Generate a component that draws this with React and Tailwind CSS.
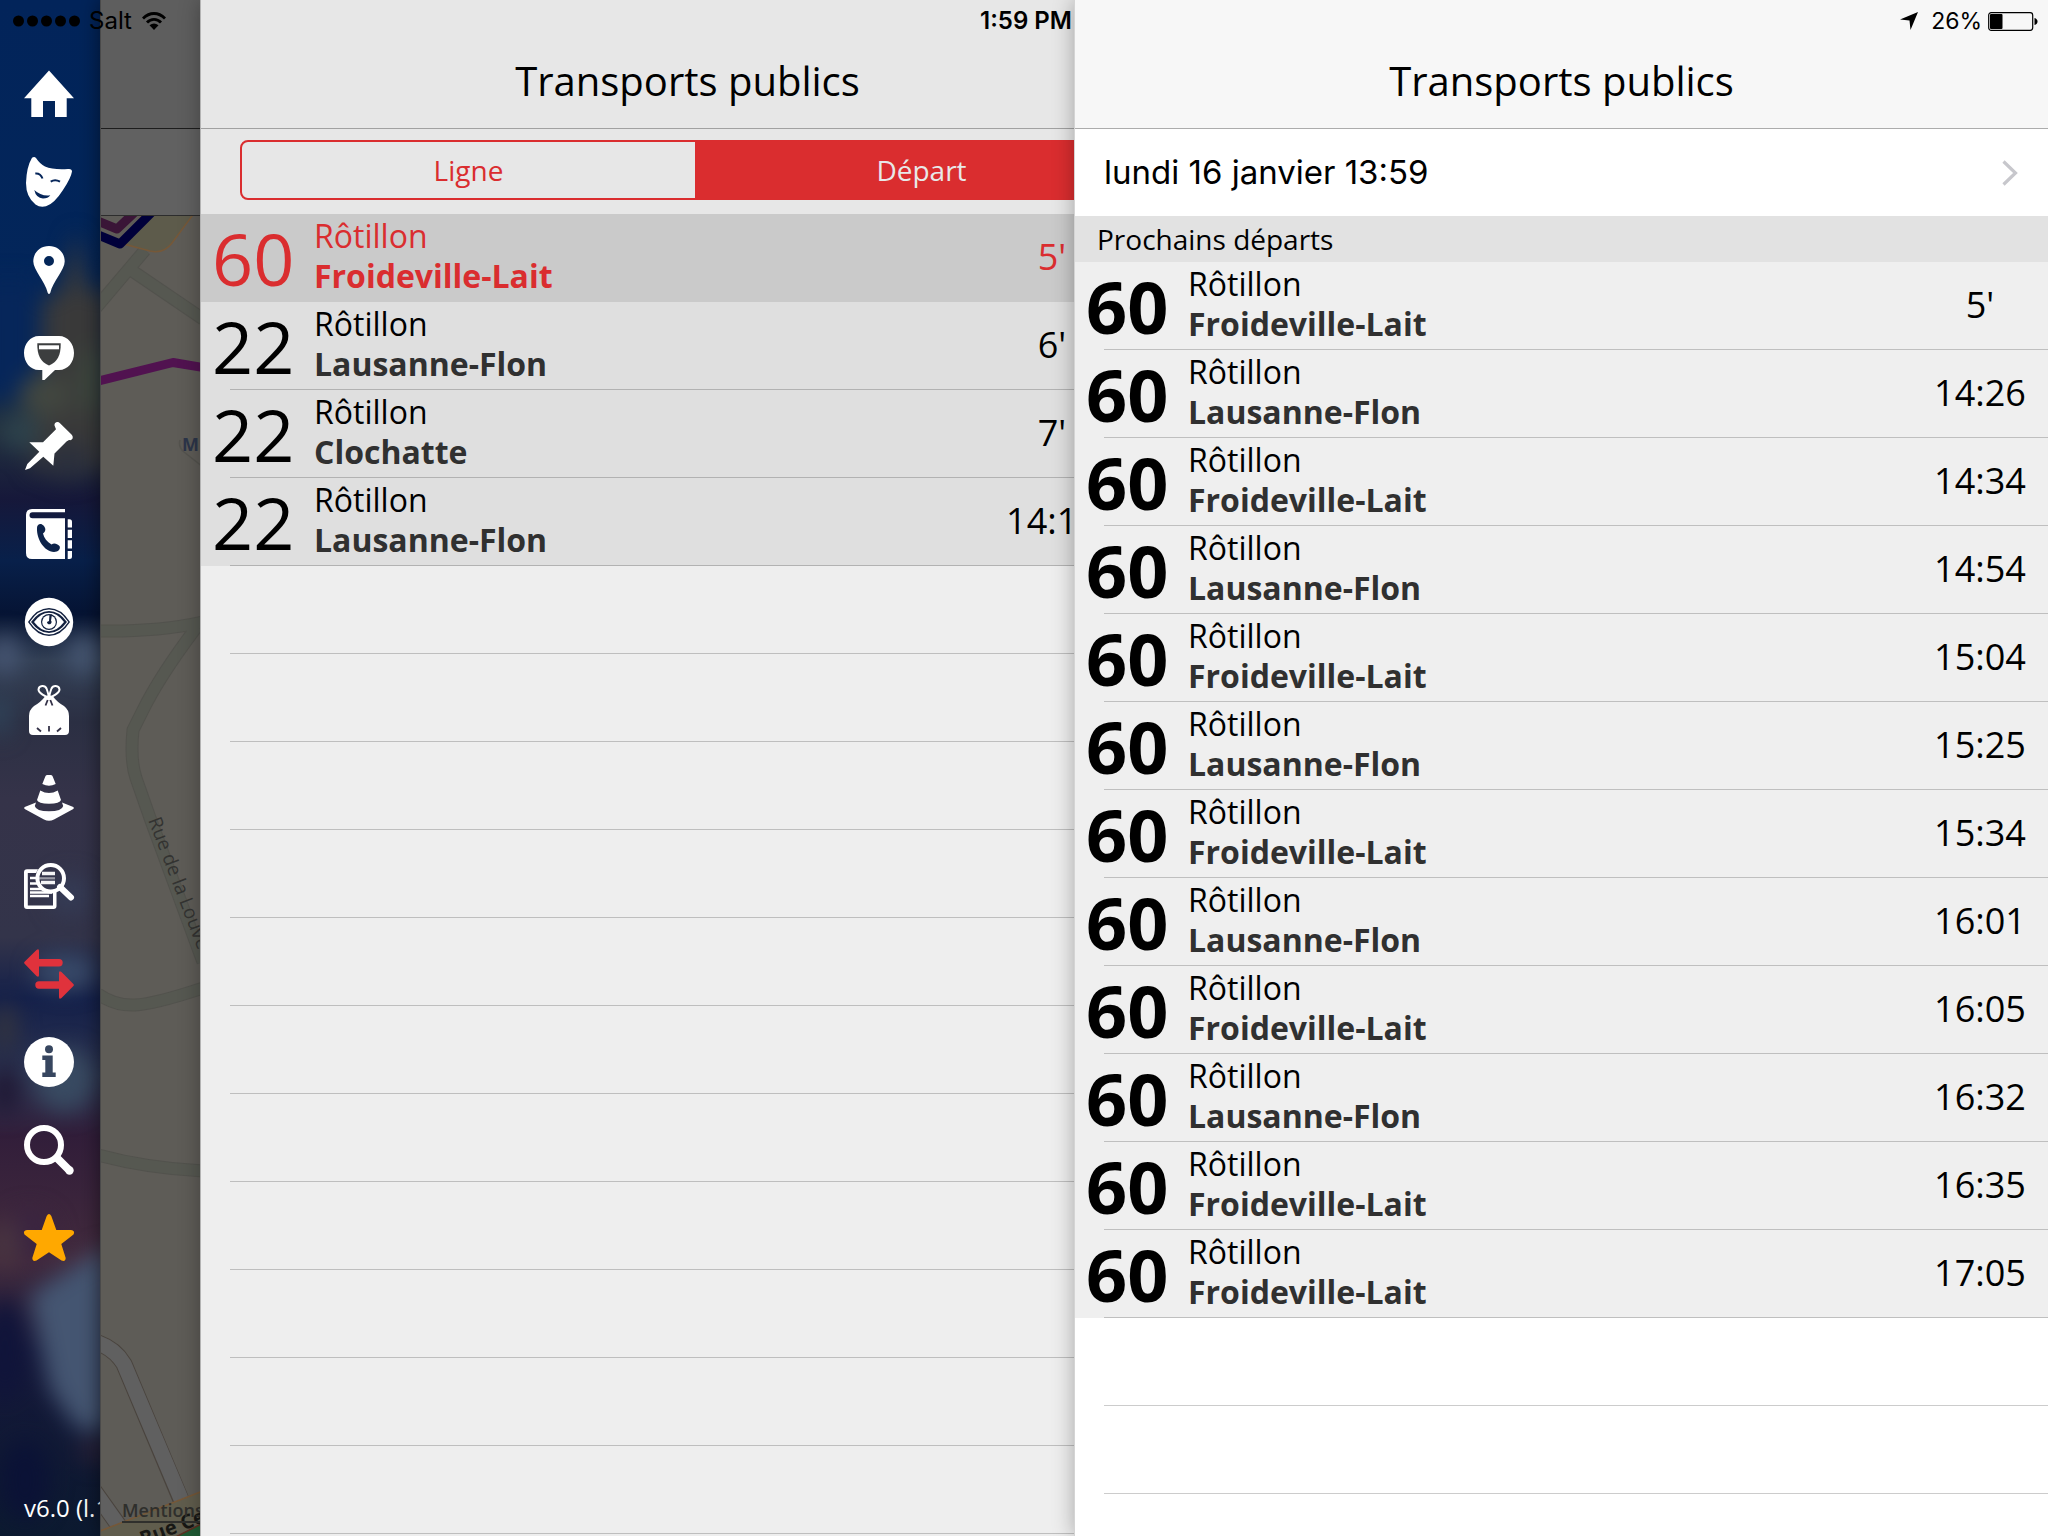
import React, { useState } from "react";

const nearby = [
    { line: "60", stop: "Rôtillon", to: "Froideville-Lait", time: "5'" },
    { line: "22", stop: "Rôtillon", to: "Lausanne-Flon", time: "6'" },
    { line: "22", stop: "Rôtillon", to: "Clochatte", time: "7'" },
    { line: "22", stop: "Rôtillon", to: "Lausanne-Flon", time: "14:14" },
];

const departures = [
    { to: "Froideville-Lait", time: "5'" },
    { to: "Lausanne-Flon", time: "14:26" },
    { to: "Froideville-Lait", time: "14:34" },
    { to: "Lausanne-Flon", time: "14:54" },
    { to: "Froideville-Lait", time: "15:04" },
    { to: "Lausanne-Flon", time: "15:25" },
    { to: "Froideville-Lait", time: "15:34" },
    { to: "Lausanne-Flon", time: "16:01" },
    { to: "Froideville-Lait", time: "16:05" },
    { to: "Lausanne-Flon", time: "16:32" },
    { to: "Froideville-Lait", time: "16:35" },
    { to: "Froideville-Lait", time: "17:05" },
];

const navItems = [
    {
        label: "Accueil",
        icon: <path d="M25 1.5 50 29.3h-7.3V48H31V32H19v16H7.3V29.3H0Z" />,
    },
    {
        label: "Culture",
        icon: (
            <>
                <path d="M8 .8Q10.300-.8 12 1Q16 7 21 9.500Q29 13 44 12Q48 11.500 48 14.500Q47 21 39 33Q30 47 22 49.300Q16 50.800 11.500 47.500Q2 40 2 26Q2.500 10 8 .8Z" />
                <path d="M11.300 16.500Q16.500 16 18.500 21.500M26.700 24.700Q31 21.800 36 24.700" fill="none" stroke="#06265a" strokeWidth="2" />
                <path d="M10.300 33Q17 39.500 26.300 38.300Q24 41.500 19 41.500Q12 41 10.300 33Z" fill="#06265a" />
            </>
        ),
    },
    {
        label: "Lieux",
        icon: (
            <path fillRule="evenodd" d="M25 1C34 1 40.700 7.500 40.700 16.500C40.700 25 29 36 26.200 48Q25 50 23.800 48C21 36 9.300 25 9.300 16.500C9.300 7.500 16 1 25 1ZM25 11a5 5 0 1 0 0 10a5 5 0 0 0 0-10Z" />
        ),
    },
    {
        label: "Ville",
        icon: (
            <>
                <path d="M15 3H35C44 3 50 11 50 20S44 37 35 37H31L20.500 47H18.300V37H15C6 37 0 29 0 20S6 3 15 3Z" />
                <path d="M13.300 10.300H36.700C37 22 33.500 29 25 32.500C16.500 29 13 22 13.300 10.300Z" fill="#3c3e3f" />
                <path d="M15 12.300H35V16.300H15Z" />
            </>
        ),
    },
    {
        label: "Signaler",
        icon: (
            <path d="M30.500 4.500C30 1 34 0 36 2.200L47.500 13.500C50 16 48.500 20 45 19L42.500 20.500L30.500 32.500L29.300 44.700L19.300 35.700L6 47.300L1 49L3.300 43L15.300 30.700L5.300 21.300L19 21.300L32 8.300Z" />
        ),
    },
    {
        label: "Annuaire",
        icon: (
            <>
                <path d="M8 0H41V3.300H8.500A3 3 0 0 0 8.500 9.300H41V50H8Q2 50 2 44V6Q2 0 8 0Z" />
                <path d="M43.700 10.300H45.500Q48 10.300 48 13V18.500H43.700ZM43.700 20.700H48V29H43.700ZM43.700 31.300H48V39.500H43.700ZM43.700 42H48V47.500Q48 50 45.500 50H43.700Z" />
                <path d="M13 19C13 15 17 13.500 19.500 16.500C22.500 20 21.500 22.500 19 24.500C20 29 23 33 27.500 35.500C30 33.500 33 34.500 35.500 37C37 40 34 43 30 43C20 42.500 12.500 30 13 19Z" fill="#0d234a" />
            </>
        ),
    },
    {
        label: "Observer",
        icon: (
            <>
                <circle cx="25" cy="25" r="24.200" />
                <path d="M4 25Q13 11 25 11T46 25Q37 39 25 39T4 25Z" fill="#12203f" />
                <path d="M5.700 25Q14 12.600 25 12.600T44.300 25Q36 37.400 25 37.400T5.700 25Z" />
                <path d="M7 25Q15 14 25 14T43 25Q35 36 25 36T7 25Z" fill="#12203f" />
                <path d="M10 25Q17 15.800 25 15.800T40 25Q33 34.200 25 34.200T10 25Z" />
                <circle cx="25" cy="25" r="8" fill="#12203f" />
                <circle cx="25" cy="25" r="6.800" />
                <path d="M25.500 17.500H28L27 23.500A2.300 2.300 0 1 1 23 25L25 24Z" fill="#12203f" />
            </>
        ),
    },
    {
        label: "Déchets",
        icon: (
            <>
                <g fill="none" stroke="currentColor" strokeWidth="2">
                    <path d="M24.500 12C22 12 14.500 8 14.500 4.500C15 0 21 0 22.500 3.500Q23.500 6 25 12" />
                    <path d="M25.500 12C28 12 35.500 8 35.500 4.500C35 0 29 0 27.500 3.500Q26.500 6 25 12" />
                </g>
                <path d="M21 11.500Q25 9.500 29 11.500Q33 17 40 21Q45 25 45 31V46Q45 50 41 50H9Q5 50 5 46V31Q5 25 10 21Q17 17 21 11.500Z" />
                <path d="M23.700 15 21.500 20.500M26.300 15 28.500 20.500M13 43 17 46.500M25 41V46.500M37 43 33 46.500" fill="none" stroke="#343248" strokeWidth="1.800" />
            </>
        ),
    },
    {
        label: "Travaux",
        icon: (
            <path d="M23 2H27Q28.300 2 28.700 3.500L31.700 11Q25 14.500 18.300 11L21.300 3.500Q21.700 2 23 2ZM16.300 17.500Q25 22.500 33.700 17.500L37 27Q36 30.700 25 30.700T13 27ZM12 29.500L10.800 33Q12 38.300 25 38.300T39.200 33L38 29.500L49.300 34Q50.500 35 49.300 36L30 46.500Q25 49 20 46.500L.7 36Q-.5 35 .7 34Z" />
        ),
    },
    {
        label: "Enquêtes",
        icon: (
            <>
                <path d="M14 8.300H3Q0 8.300 0 11.300V45Q0 48 3 48H29.500Q32.500 48 32.500 45V31H29V44.500H3.800V12H12Z" />
                <path d="M6 17H12M6 22.500H14M6 28H18M6 31.500H28M6 35H25" fill="none" stroke="currentColor" strokeWidth="2.400" />
                <path d="M18 12.500H31M17 21.500H31" fill="none" stroke="currentColor" strokeWidth="3.400" opacity=".95" />
                <path d="M15 17.300H31" fill="none" stroke="currentColor" strokeWidth="2.200" opacity=".5" />
                <circle cx="26.700" cy="17.300" r="13.300" fill="none" stroke="currentColor" strokeWidth="4" />
                <path d="M36 26 47 36.500" fill="none" stroke="currentColor" strokeWidth="6" strokeLinecap="round" />
            </>
        ),
    },
    {
        label: "Transports publics",
        active: true,
        icon: (
            <>
                <path d="M.6 12.700 12.500 1Q15 -1 15 2V10H35A3.700 3.700 0 0 1 35 17.400H15V26Q15 29 12.500 27L.6 14.700Q-.5 13.700 .6 12.700Z" />
                <path d="M49.400 35 37.500 23Q35 21 35 24V32.300H15A3.700 3.700 0 0 0 15 39.700H35V48Q35 51 37.500 49L49.400 37Q50.500 36 49.400 35Z" />
            </>
        ),
    },
    {
        label: "Informations",
        icon: (
            <>
                <circle cx="25" cy="25" r="25" />
                <g fill="#37465f">
                    <circle cx="25" cy="12.300" r="4" />
                    <path d="M18.300 18.500H28.700V35.500H31.700V40H18.300V35.500H21.300V23H18.300Z" />
                </g>
            </>
        ),
    },
    {
        label: "Recherche",
        icon: (
            <>
                <circle cx="20" cy="20" r="17" fill="none" stroke="currentColor" strokeWidth="6" />
                <path d="M32.500 32.500 45.500 45.500" fill="none" stroke="currentColor" strokeWidth="8" />
                <circle cx="45.500" cy="45.500" r="4.200" />
            </>
        ),
    },
    {
        label: "Favoris",
        favorite: true,
        icon: (
            <path d="M22.700 3Q25-1 27.300 3L32.300 17H47Q51.500 17.500 49.500 21.500L37.300 31L41.700 45Q41.500 49 37.500 47.500L25 39.300L12.500 47.500Q8.500 49 8.300 45L12.700 31L.5 21.500Q-1.500 17.500 3 17H17.700Z" />
        ),
    },
];

function StatusBar() {
    return (
        <div className="pointer-events-none absolute inset-x-0 top-0 z-50 grid h-[42px] grid-cols-3 items-center font-['Inter',sans-serif] text-2xl text-black">
            <div className="flex items-center pl-[13px]">
                <svg className="h-3 w-[68px]" viewBox="0 0 68 12" fill="currentColor" aria-hidden="true">
                    <circle cx="5.500" cy="6" r="5.500" />
                    <circle cx="19.500" cy="6" r="5.500" />
                    <circle cx="33.500" cy="6" r="5.500" />
                    <circle cx="47.500" cy="6" r="5.500" />
                    <circle cx="61.500" cy="6" r="5.500" />
                </svg>
                <span className="ml-2">Salt</span>
                <svg className="ml-[10px] h-[18px] w-6" viewBox="0 0 24 18" fill="none" stroke="currentColor" strokeWidth="2.800" aria-hidden="true">
                    <path d="M1 6.500Q6 1.500 12 1.500T23 6.500" />
                    <path d="M5 10.500Q8 7.300 12 7.300T19 10.500" />
                    <path d="M7.500 13.300Q12 9.800 16.500 13.300L12 18Z" fill="currentColor" stroke="none" />
                </svg>
            </div>
            <div className="pl-1 text-center font-semibold">1:59 PM</div>
            <div className="flex items-center justify-end pr-[10px]">
                <svg className="mr-[13px] h-[18px] w-[18px]" viewBox="0 0 18 18" fill="currentColor" aria-hidden="true">
                    <path d="M18 0 10.500 18 9.500 8.500 0 7.500Z" />
                </svg>
                <span className="text-[23px]">26%</span>
                <svg className="ml-[6px] h-[19px] w-[50px]" viewBox="0 0 50 19" fill="currentColor" aria-hidden="true">
                    <rect x=".7" y=".7" width="44" height="17.600" rx="2.500" fill="none" stroke="currentColor" strokeWidth="1.200" />
                    <rect x="2" y="2" width="12.500" height="15" rx="1" />
                    <path d="M46.500 6Q49.500 7 49.500 9.500T46.500 13Z" />
                </svg>
            </div>
        </div>
    );
}

function SidebarBackdrop() {
    return (
        <svg className="absolute inset-0 h-full w-full" viewBox="0 0 100 1536" preserveAspectRatio="none" aria-hidden="true">
            <defs>
                <linearGradient id="sky" x1="0" y1="0" x2="0" y2="1">
                    <stop offset="0" stopColor="#02245a" />
                    <stop offset=".2" stopColor="#03265a" />
                    <stop offset=".28" stopColor="#22303f" />
                    <stop offset=".325" stopColor="#16183a" />
                    <stop offset=".365" stopColor="#08204a" />
                    <stop offset=".4" stopColor="#061434" />
                    <stop offset=".43" stopColor="#334055" />
                    <stop offset=".47" stopColor="#2c3044" />
                    <stop offset=".52" stopColor="#353349" />
                    <stop offset=".61" stopColor="#33344a" />
                    <stop offset=".65" stopColor="#14204a" />
                    <stop offset=".7" stopColor="#2c3350" />
                    <stop offset=".74" stopColor="#321e3a" />
                    <stop offset=".82" stopColor="#432b3e" />
                    <stop offset=".88" stopColor="#15183a" />
                    <stop offset="1" stopColor="#0c1a30" />
                </linearGradient>
                <filter id="soft" filterUnits="userSpaceOnUse" x="-60" y="150" width="220" height="1420" colorInterpolationFilters="sRGB">
                    <feGaussianBlur stdDeviation="11" />
                </filter>
            </defs>
            <rect width="100" height="1536" fill="url(#sky)" />
            <g filter="url(#soft)">
                <path d="M-20 280H38V400L0 400H-20Z" fill="#06265a" />
                <path d="M76 230 88 290H110V470H30L42 400V300L62 290Z" fill="#3a3a3a" />
                <ellipse cx="45" cy="395" rx="26" ry="22" fill="#424740" />
                <ellipse cx="92" cy="380" rx="12" ry="35" fill="#3d483e" />
                <ellipse cx="20" cy="432" rx="20" ry="18" fill="#2d424c" />
                <ellipse cx="68" cy="460" rx="25" ry="20" fill="#2d313d" />
                <ellipse cx="5" cy="655" rx="16" ry="20" fill="#465572" />
                <ellipse cx="85" cy="655" rx="20" ry="20" fill="#455570" />
                <ellipse cx="0" cy="715" rx="10" ry="22" fill="#30465c" />
                <ellipse cx="70" cy="895" rx="20" ry="20" fill="#353c56" />
                <ellipse cx="65" cy="972" rx="32" ry="18" fill="#394b6a" />
                <ellipse cx="5" cy="1028" rx="12" ry="25" fill="#33343f" />
                <ellipse cx="65" cy="1080" rx="30" ry="32" fill="#394b62" />
                <ellipse cx="5" cy="1090" rx="14" ry="25" fill="#1f1834" />
                <ellipse cx="30" cy="1235" rx="25" ry="25" fill="#3a2440" />
                <ellipse cx="5" cy="1245" rx="16" ry="24" fill="#483440" />
                <path d="M110 1245 60 1275 30 1295 50 1390 78 1430H110Z" fill="#455672" />
                <ellipse cx="5" cy="1350" rx="20" ry="50" fill="#10143a" />
                <ellipse cx="95" cy="1450" rx="18" ry="12" fill="#2a2238" />
                <ellipse cx="25" cy="1480" rx="25" ry="40" fill="#0b1236" />
            </g>
        </svg>
    );
}

function Sidebar() {
    return (
        <nav aria-label="Menu principal" className="relative w-[100px] shrink-0 overflow-hidden text-white">
            <SidebarBackdrop />
            <div className="relative flex h-full flex-col pt-[50px]">
                {navItems.map(item => (
                    <button
                        key={item.label}
                        type="button"
                        aria-label={item.label}
                        aria-current={item.active ? "page" : undefined}
                        className={`flex h-[88px] shrink-0 items-center pl-6 ${item.active ? "text-[#e0323c]" : item.favorite ? "text-[#ffa800]" : "text-white"}`}
                    >
                        <svg className="h-[50px] w-[50px] overflow-visible" viewBox="0 0 50 50" fill="currentColor" aria-hidden="true">
                            {item.icon}
                        </svg>
                    </button>
                ))}
                <p className="mt-auto pb-3 pl-6 text-2xl whitespace-nowrap">v6.0 (l.12)</p>
            </div>
        </nav>
    );
}

function MapStrip() {
    return (
        <section aria-label="Carte" className="relative flex w-[100px] shrink-0 flex-col border-l border-[#4a4a4a] bg-[#5e5c57] shadow-[0_0_20px_rgba(0,0,0,0.5)]">
            <div className="h-[129px] shrink-0 border-b border-[#1d1d1d] bg-[#5e5e5e]" />
            <div className="h-[87px] shrink-0 border-b border-[#2d2d2d] bg-[#616161]" />
            <div className="relative min-h-0 flex-1 overflow-hidden">
                <svg className="h-full w-full" viewBox="101 216 99 1320" preserveAspectRatio="xMinYMin slice" aria-hidden="true">
                    <g fill="none" strokeLinejoin="round">
                        <g stroke="#52524d" strokeWidth="13">
                            <path d="M95 309 145 250M128 268 203 319" />
                            <path d="M98 631Q160 632 203 622M199 624Q160 675 142 712L133 730Q130 760 136 778L150 818L203 962" />
                            <path d="M98 994Q115 1006 135 1005T203 988M98 1155Q145 1168 203 1171" />
                        </g>
                        <g stroke="#565851" strokeWidth="11">
                            <path d="M95 309 145 250M128 268 203 319" />
                            <path d="M98 631Q160 632 203 622M199 624Q160 675 142 712L133 730Q130 760 136 778L150 818L203 962" />
                            <path d="M98 994Q115 1006 135 1005T203 988M98 1155Q145 1168 203 1171" />
                        </g>
                        <path d="M180 440Q178 447 184 452L203 467" stroke="#54534e" strokeWidth="1.500" />
                        <path d="M120 243 150 251Q164 254 172 243L195 212H145Z" fill="#5d5b4b" stroke="#765838" strokeWidth="1.500" />
                        <path d="M98 221 117 229 135 212" stroke="#3a1537" strokeWidth="9" />
                        <path d="M98 235 120 244 152 212" stroke="#00003a" strokeWidth="9" />
                        <path d="M98 381 173 362.500 203 367.500" stroke="#511250" strokeWidth="9" />
                        <path d="M98 1343Q115 1349 124 1364L181 1500M92 1488 122 1530" stroke="#4a443e" strokeWidth="17" />
                        <path d="M98 1343Q115 1349 124 1364L184 1506M92 1488 124 1533" stroke="#606060" strokeWidth="15" />
                        <path d="M95 1533 203 1491V1545H95Z" fill="#605d4d" stroke="#765838" strokeWidth="1.500" />
                        <path d="M160 1545 203 1523V1545Z" fill="#1f5a33" stroke="#5c2f20" strokeWidth="1.500" />
                    </g>
                    <g fontFamily="'Open Sans', sans-serif">
                        <text x="182" y="451" fontSize="18" fontWeight="700" fill="#2c3549">M</text>
                        <text transform="translate(148 820) rotate(69)" fontSize="19" fontWeight="500" fill="#333331">Rue de la Louve</text>
                        <text transform="translate(143 1546) rotate(-21)" fontSize="20" fontWeight="700" fill="#171714">Rue Centrale</text>
                    </g>
                </svg>
                <a href="#mentions" className="absolute bottom-3 left-[21px] text-lg font-semibold text-[#2f2f2c] underline decoration-2 underline-offset-4">
                    Mentions
                </a>
            </div>
        </section>
    );
}

function PanelHeader() {
    return (
        <header className="flex h-[129px] shrink-0 items-center justify-center border-b border-black/30 pt-[34px]">
            <h1 className="text-[40px] leading-[56px]">Transports publics</h1>
        </header>
    );
}

function DepartureRow({ line, stop, to, time, bold, selected, inset }) {
    return (
        <li className={selected ? "bg-[#cacaca] text-[#da2d2f]" : ""}>
            <button type="button" className="relative flex h-[88px] w-full text-left">
                <span className={`w-[113px] shrink-0 pl-[11px] text-7xl leading-[88px] ${bold ? "font-bold" : ""}`}>{line}</span>
                <span className="flex flex-1 flex-col pt-[2px] text-[32px] leading-10">
                    <span>{stop}</span>
                    <span className={`font-bold ${selected ? "" : "text-[#303030]"}`}>{to}</span>
                </span>
                <span className={`w-[136px] shrink-0 text-center text-4xl leading-[86px] ${inset ? "mr-[54px]" : ""}`}>{time}</span>
                {!selected && <span className="absolute right-0 bottom-0 left-[29px] border-b border-black/20" />}
            </button>
        </li>
    );
}

function EmptyRows({ count }) {
    return (
        <div aria-hidden="true">
            {Array.from({ length: count }, (_, i) => (
                <div key={i} className="ml-[29px] h-[88px] border-b border-black/20" />
            ))}
        </div>
    );
}

export default function App() {
    const [mode, setMode] = useState("depart");
    const [selected, setSelected] = useState(0);

    const segment = (id) =>
        `flex-1 text-[28px] leading-[56px] ${mode === id ? "bg-[#da2d2f] text-[#e8e8e8]" : "text-[#da2d2f]"}`;

    return (
        <div className="relative flex h-screen overflow-hidden bg-black font-['Open_Sans','Noto_Sans',sans-serif] text-black">
            <StatusBar />
            <Sidebar />
            <MapStrip />

            <main className="relative min-w-0 flex-1 border-l border-[#b4b4b4] bg-[#eeeeee] shadow-[0_0_20px_rgba(0,0,0,0.3)]">
                <div className="h-full overflow-hidden">
                    {/* full panel width, the right part slides under the detail panel */}
                    <div className="flex w-[calc(50vw-51px)] flex-col">
                        <div className="bg-[#e7e7e7]">
                            <PanelHeader />
                            <div className="flex h-[85px] pt-[11px] pr-6 pb-[14px] pl-[39px]">
                                <div className="flex flex-1 overflow-hidden rounded-lg border-2 border-[#da2d2f]">
                                    <button type="button" aria-pressed={mode === "ligne"} className={segment("ligne")} onClick={() => setMode("ligne")}>
                                        Ligne
                                    </button>
                                    <button type="button" aria-pressed={mode === "depart"} className={segment("depart")} onClick={() => setMode("depart")}>
                                        Départ
                                    </button>
                                </div>
                            </div>
                        </div>
                        <ul className="bg-[#dfdfdf]">
                            {nearby.map((d, i) => (
                                <DepartureRow key={i} {...d} inset selected={i === selected} />
                            ))}
                        </ul>
                        <EmptyRows count={11} />
                    </div>
                </div>
            </main>

            <aside className="relative flex w-[calc(50vw-50px)] shrink-0 flex-col border-l border-[#d4d4d4] bg-white shadow-[0_0_20px_rgba(0,0,0,0.3)]">
                <div className="bg-[#f7f7f7]">
                    <PanelHeader />
                </div>
                <button type="button" className="flex h-[87px] shrink-0 items-center justify-between pr-[30px] pl-[29px] text-left font-['Inter',sans-serif] text-[33px]">
                    lundi 16 janvier 13:59
                    <svg className="h-[26px] w-4" viewBox="0 0 16 26" fill="none" stroke="#c7c7cc" strokeWidth="3.200" aria-hidden="true">
                        <path d="M1.500 1.500 13.500 13 1.500 24.500" />
                    </svg>
                </button>
                <h2 className="h-[46px] shrink-0 bg-[#e2e2e2] pl-[22px] text-[28px] leading-[46px]">Prochains départs</h2>
                <ul className="bg-[#efefef]">
                    {departures.map((d) => (
                        <DepartureRow key={d.time} line="60" stop="Rôtillon" bold {...d} />
                    ))}
                </ul>
                <EmptyRows count={3} />
            </aside>
        </div>
    );
}
